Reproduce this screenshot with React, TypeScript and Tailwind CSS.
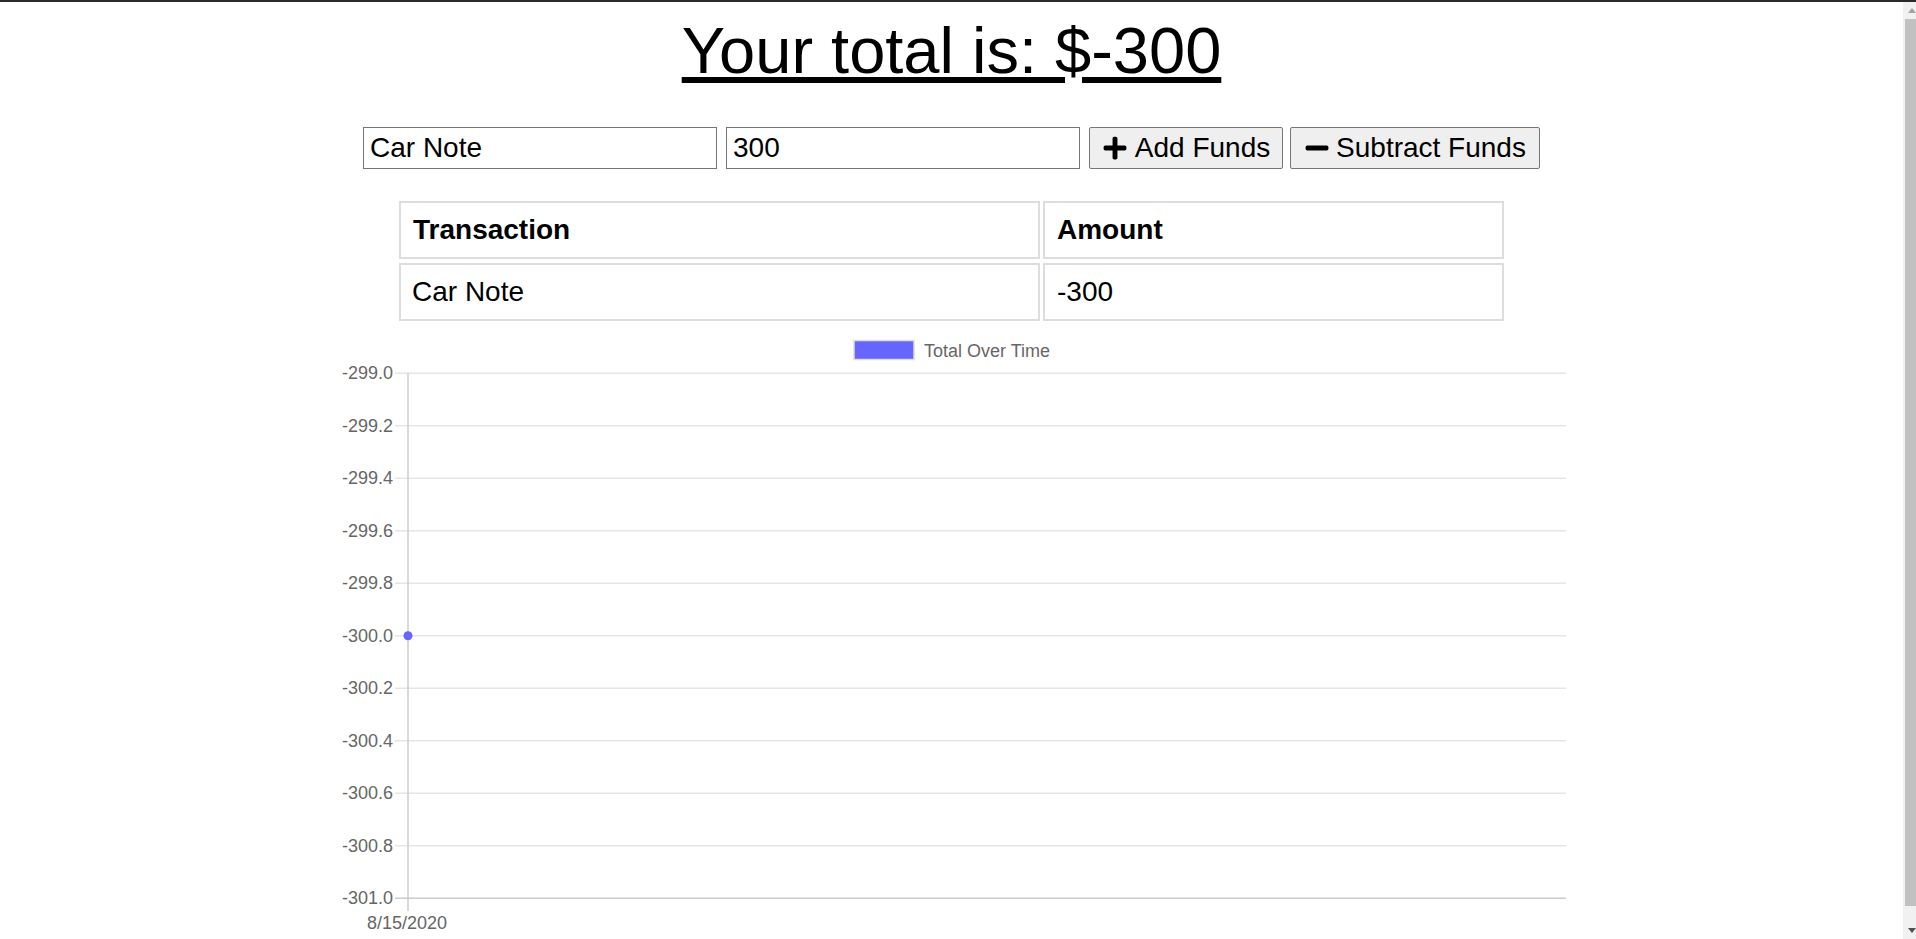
import { FaPlus, FaMinus } from 'react-icons/fa';

const ticks = ['-299.0', '-299.2', '-299.4', '-299.6', '-299.8', '-300.0', '-300.2', '-300.4', '-300.6', '-300.8', '-301.0'];
const top = 373.2;
const step = 52.51;

function Chart() {
    // coordinates inside the svg are page coordinates
    return (
        <svg width="1903" height="609" viewBox="0 330 1903 609" className="block shrink-0" fontFamily="'Liberation Sans', Arial, sans-serif">
            <rect x="854" y="340.5" width="60" height="19" fill="#6666ff" stroke="#dedede" strokeWidth="1.5" />
            <text x="924" y="350.5" fontSize="18" fill="#666" dominantBaseline="central">Total Over Time</text>

            {ticks.map((t, i) => {
                const y = top + i * step;
                return (
                    <g key={t}>
                        <line x1="395" x2="1566" y1={y} y2={y} stroke={i === ticks.length - 1 ? '#cccccc' : '#e5e5e5'} strokeWidth="1.5" />
                        <text x="393" y={y} fontSize="18" fill="#666" textAnchor="end" dominantBaseline="central">{t}</text>
                    </g>
                );
            })}

            <line x1="408" x2="408" y1="373" y2="911" stroke="#cccccc" strokeWidth="1.5" />
            <circle cx="408" cy={top + 5 * step} r="4.5" fill="#6666ff" />
            <text x="407" y="923" fontSize="18" fill="#666" textAnchor="middle" dominantBaseline="central">8/15/2020</text>
        </svg>
    );
}

function Scrollbar() {
    return (
        <div className="w-[13px] shrink-0 bg-[#f1f1f1] flex flex-col">
            <div className="h-[17px] flex items-center pl-[5px]">
                <svg width="8" height="5" viewBox="0 0 8 5"><polygon points="0,5 8,5 4,0" fill="#a3a3a3" /></svg>
            </div>
            <div className="h-[887px] ml-[2px] bg-[#c1c1c1]" />
            <div className="flex-1" />
            <div className="h-[17px] flex items-center pl-[5px]">
                <svg width="8" height="5" viewBox="0 0 8 5"><polygon points="0,0 8,0 4,5" fill="#505050" /></svg>
            </div>
        </div>
    );
}

export default function App() {
    return (
        <div className="h-[939px] flex flex-col overflow-hidden bg-white text-black font-['Liberation_Sans',Arial,sans-serif]">
            <div className="h-[2px] shrink-0 bg-[#2b2b2b]" />
            <div className="flex flex-1 min-h-0">
                <main className="flex-1 flex flex-col items-center overflow-hidden">
                    <h1 className="mt-[12px] text-[65px] leading-[74px] font-normal underline">Your total is: $-300</h1>

                    <form className="mt-[39px] flex h-[42px]" onSubmit={e => e.preventDefault()}>
                        <input
                            className="w-[354px] h-[42px] border border-[#767676] px-[6px] text-[28px] outline-none"
                            defaultValue="Car Note"
                        />
                        <input
                            className="ml-[9px] w-[354px] h-[42px] border border-[#767676] px-[6px] text-[28px] outline-none"
                            defaultValue="300"
                        />
                        <button className="ml-[9px] w-[194px] h-[42px] flex items-center justify-center bg-[#efefef] border border-[#767676] rounded-[2px] text-[28px]">
                            <FaPlus size={26} />
                            <span className="ml-[7px]">Add Funds</span>
                        </button>
                        <button className="ml-[7px] w-[250px] h-[42px] flex items-center justify-center bg-[#efefef] border border-[#767676] rounded-[2px] text-[28px]">
                            <FaMinus size={26} />
                            <span className="ml-[6px]">Subtract Funds</span>
                        </button>
                    </form>

                    <div className="mt-[32px] grid grid-cols-[641px_461px] gap-x-[3px] gap-y-[4px] text-[28px]">
                        <div className="h-[58px] flex items-center pl-[12px] border-2 border-[#dddddd] font-bold">Transaction</div>
                        <div className="h-[58px] flex items-center pl-[12px] border-2 border-[#dddddd] font-bold">Amount</div>
                        <div className="h-[58px] flex items-center pl-[11px] border-2 border-[#dddddd]">Car Note</div>
                        <div className="h-[58px] flex items-center pl-[12px] border-2 border-[#dddddd]">-300</div>
                    </div>

                    <div className="mt-[9px]">
                        <Chart />
                    </div>
                </main>
                <Scrollbar />
            </div>
        </div>
    );
}
